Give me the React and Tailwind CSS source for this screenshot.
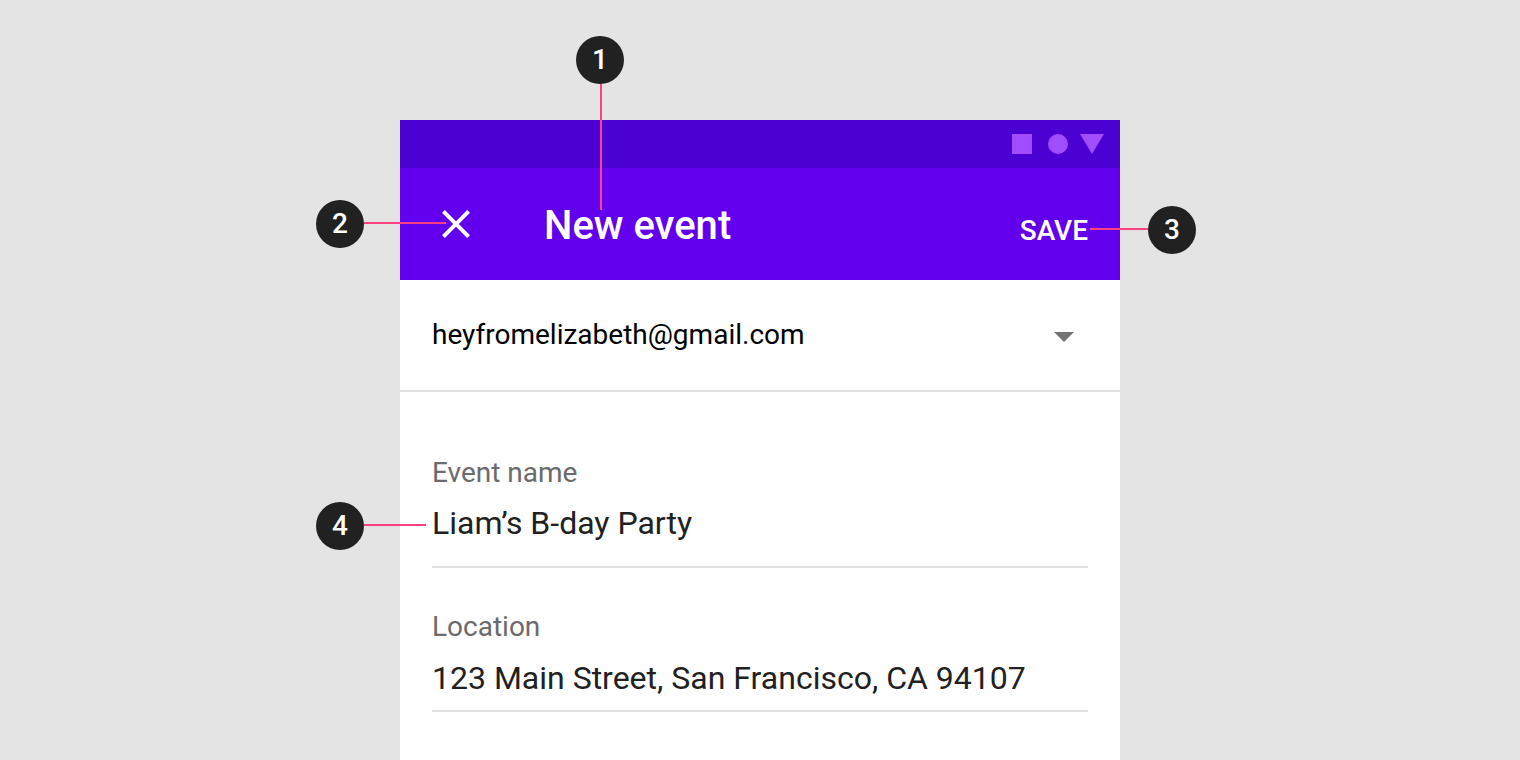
function Badge({ children }) {
  return (
    <span className="flex size-12 shrink-0 items-center justify-center rounded-full bg-[#212121] text-[28px] leading-8 font-medium text-white">
      {children}
    </span>
  );
}

function StatusBar() {
  return (
    <div className="flex h-12 items-center justify-end bg-[#4b01d1] px-4">
      <svg width="92" height="20" viewBox="0 0 92 20" fill="#a04dff" aria-hidden="true">
        <rect width="20" height="20" />
        <circle cx="46" cy="10" r="10" />
        <path d="M68 0h24L80 20z" />
      </svg>
    </div>
  );
}

function AppBar() {
  return (
    <header className="relative flex h-28 items-center bg-[#6200ee] px-8 text-white">
      <button type="button" aria-label="Close" className="size-12 shrink-0">
        <svg viewBox="0 0 24 24" fill="currentColor" className="size-12" aria-hidden="true">
          <path d="M19 6.41L17.59 5 12 10.59 6.41 5 5 6.41 10.59 12 5 17.59 6.41 19 12 13.41 17.59 19 19 17.59 13.41 12z" />
        </svg>
      </button>
      <h1 className="ml-16 flex-1 pt-1 text-[40px] leading-12 font-medium">New event</h1>
      <button type="button" className="pt-3.5 text-[28px] leading-8 font-medium">
        SAVE
      </button>

      <div className="absolute -top-[132px] left-44 flex flex-col items-center">
        <Badge>1</Badge>
        <span className="ml-0.5 h-[126px] w-0.5 bg-[#ff4081]" />
      </div>
      <div className="absolute top-8 -left-[84px] flex items-center">
        <Badge>2</Badge>
        <span className="mb-0.5 h-0.5 w-[82px] bg-[#ff4081]" />
      </div>
      <div className="absolute top-[38px] -right-[76px] flex items-center">
        <span className="mb-0.5 h-0.5 w-[58px] bg-[#ff4081]" />
        <Badge>3</Badge>
      </div>
    </header>
  );
}

function AccountSelect() {
  return (
    <div className="relative border-b-2 border-[#e0e0e0]">
      <select
        aria-label="Account"
        className="block h-[110px] w-full appearance-none bg-transparent px-8 text-[28px] text-black outline-none"
      >
        <option>heyfromelizabeth@gmail.com</option>
      </select>
      <svg
        viewBox="0 0 24 24"
        fill="#757575"
        className="pointer-events-none absolute top-8 right-8 size-12"
        aria-hidden="true"
      >
        <path d="M7 10l5 5 5-5z" />
      </svg>
    </div>
  );
}

function Field({ id, label, value, inputClass, children }) {
  return (
    <div className="relative flex flex-col gap-2.5">
      <label htmlFor={id} className="text-[28px] leading-10 text-[#6b6b6b]">
        {label}
      </label>
      <input
        id={id}
        type="text"
        defaultValue={value}
        className={`w-full border-b-2 border-[#e0e0e0] text-[32px] leading-10 text-[#212121] outline-none ${inputClass}`}
      />
      {children}
    </div>
  );
}

export default function App() {
  return (
    <div className="flex min-h-screen flex-col bg-[#e4e4e4] pt-[120px] font-['Roboto',sans-serif]">
      <main className="mx-auto flex w-full max-w-[720px] flex-1 flex-col bg-white">
        <StatusBar />
        <AppBar />
        <AccountSelect />
        <form className="flex flex-col gap-[39px] px-8 pt-[61px] pb-8">
          <Field id="event-name" label="Event name" value="Liam’s B-day Party" inputClass="h-[65px] pb-6">
            <div className="absolute top-[49px] -left-[116px] flex items-center">
              <Badge>4</Badge>
              <span className="mb-0.5 h-0.5 w-[62px] bg-[#ff4081]" />
            </div>
          </Field>
          <Field
            id="location"
            label="Location"
            value="123 Main Street, San Francisco, CA 94107"
            inputClass="h-[55px] pb-3"
          />
        </form>
      </main>
    </div>
  );
}
